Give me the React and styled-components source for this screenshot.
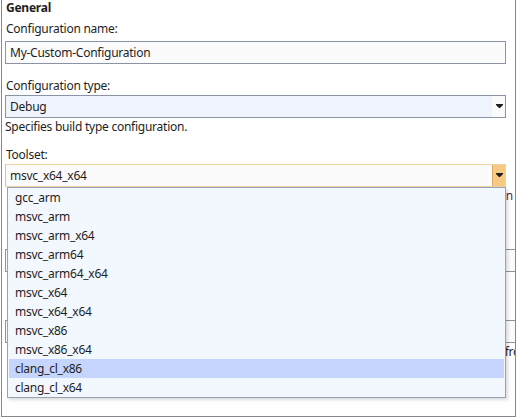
import React from "react";
import styled, { createGlobalStyle } from "styled-components";

const Global = createGlobalStyle`
  html, body { margin: 0; padding: 0; background: #ffffff; }
  body { font-family: "Noto Sans", "Open Sans", sans-serif; font-size: 12px; letter-spacing: -0.25px; color: #1e1e1e; }
`;

const Panel = styled.div`
  margin-left: 1px;
  width: 513px;
  height: 416px;
  border: 1px solid #828790;
  border-top: none;
  overflow: hidden;
  background: #fff;
`;

const Form = styled.div`
  display: flex;
  flex-direction: column;
  padding-left: 3px;
`;

const Heading = styled.div`
  font-weight: 700;
  line-height: 16px;
  height: 16px;
  padding-left: 1px;
`;

const Label = styled.div`
  line-height: 16px;
  height: 16px;
  padding-left: 1px;
  margin-top: ${(p) => p.$mt || 0}px;
  white-space: nowrap;
`;

const Spacer = styled.div`
  height: ${(p) => p.$h}px;
  flex-shrink: 0;
`;

const Help = styled.div`
  line-height: 16px;
  height: 16px;
  margin-top: ${(p) => p.$mt || 0}px;
  white-space: nowrap;
  ${(p) => (p.$w ? `width: ${p.$w}px; text-align: right;` : "")}
  color: ${(p) => p.$color || "#1e1e1e"};
`;

const TextBox = styled.div`
  box-sizing: border-box;
  width: ${(p) => p.$w || 501}px;
  height: 23px;
  margin-top: ${(p) => p.$mt || 0}px;
  border: 1px solid #8a94a6;
  background: #fbfbfb;
  padding-left: 4px;
  line-height: 21px;
  flex-shrink: 0;
`;

const Select = styled.div`
  position: relative;
  box-sizing: border-box;
  width: 501px;
  height: 23px;
  margin-top: ${(p) => p.$mt || 0}px;
  display: flex;
  border: 1px solid ${(p) => (p.$active ? "#f0d3a2" : "#8a94a6")};
  border-left-color: ${(p) => (p.$active ? "#e8c283" : "#8a94a6")};
  background: ${(p) => (p.$active ? "#fbfbfb" : "#eef3fc")};
  flex-shrink: 0;
`;

const SelectValue = styled.div`
  flex: 1;
  padding-left: 4px;
  line-height: 21px;
`;

const ArrowButton = styled.div`
  width: 12px;
  display: flex;
  align-items: center;
  justify-content: center;
  background: ${(p) => (p.$active ? "#f7c983" : "#fafafa")};
  border-left: 1px solid ${(p) => (p.$active ? "#e0ab62" : "transparent")};
`;

const List = styled.div`
  position: absolute;
  top: calc(100% + 1px);
  left: 1px;
  right: -1px;
  z-index: 5;
  border: 1px solid #98a2b3;
  background: #f3f7fe;
  padding: 0 1px;
  box-shadow: 2px 2px 3px rgba(0, 0, 0, 0.14);
`;

const Item = styled.div`
  height: 19px;
  line-height: 19px;
  padding-left: 6px;
  background: ${(p) => (p.$selected ? "#c5d5fd" : "transparent")};
`;

const Arrow = () => (
  <svg width="7" height="5" viewBox="0 0 7 5">
    <polygon points="0,0 7,0 7,1 4,4 3,4 0,1" fill="#1e1e1e" />
  </svg>
);

const toolsets = [
  "gcc_arm",
  "msvc_arm",
  "msvc_arm_x64",
  "msvc_arm64",
  "msvc_arm64_x64",
  "msvc_x64",
  "msvc_x64_x64",
  "msvc_x86",
  "msvc_x86_x64",
  "clang_cl_x86",
  "clang_cl_x64",
];

export default function App() {
  return (
    <>
      <Global />
      <Panel>
        <Form>
          <Heading>General</Heading>
          <Label $mt={5}>Configuration name:</Label>
          <TextBox $mt={4}>My-Custom-Configuration</TextBox>
          <Label $mt={14}>Configuration type:</Label>
          <Select $mt={1}>
            <SelectValue>Debug</SelectValue>
            <ArrowButton>
              <Arrow />
            </ArrowButton>
          </Select>
          <Help $mt={1}>Specifies build type configuration.</Help>
          <Label $mt={12}>Toolset:</Label>
          <Select $mt={1} $active>
            <SelectValue>msvc_x64_x64</SelectValue>
            <ArrowButton $active>
              <Arrow />
            </ArrowButton>
            <List>
              {toolsets.map((t) => (
                <Item key={t} $selected={t === "clang_cl_x86"}>
                  {t}
                </Item>
              ))}
            </List>
          </Select>
          <Help $mt={1} $w={508} $color="#5a2350">
            when
          </Help>
          <Spacer $h={45} />
          <TextBox $w={530} />
          <Spacer $h={48} />
          <TextBox $w={530} />
          <Help $mt={1} $w={526}>
            from
          </Help>
        </Form>
      </Panel>
    </>
  );
}
